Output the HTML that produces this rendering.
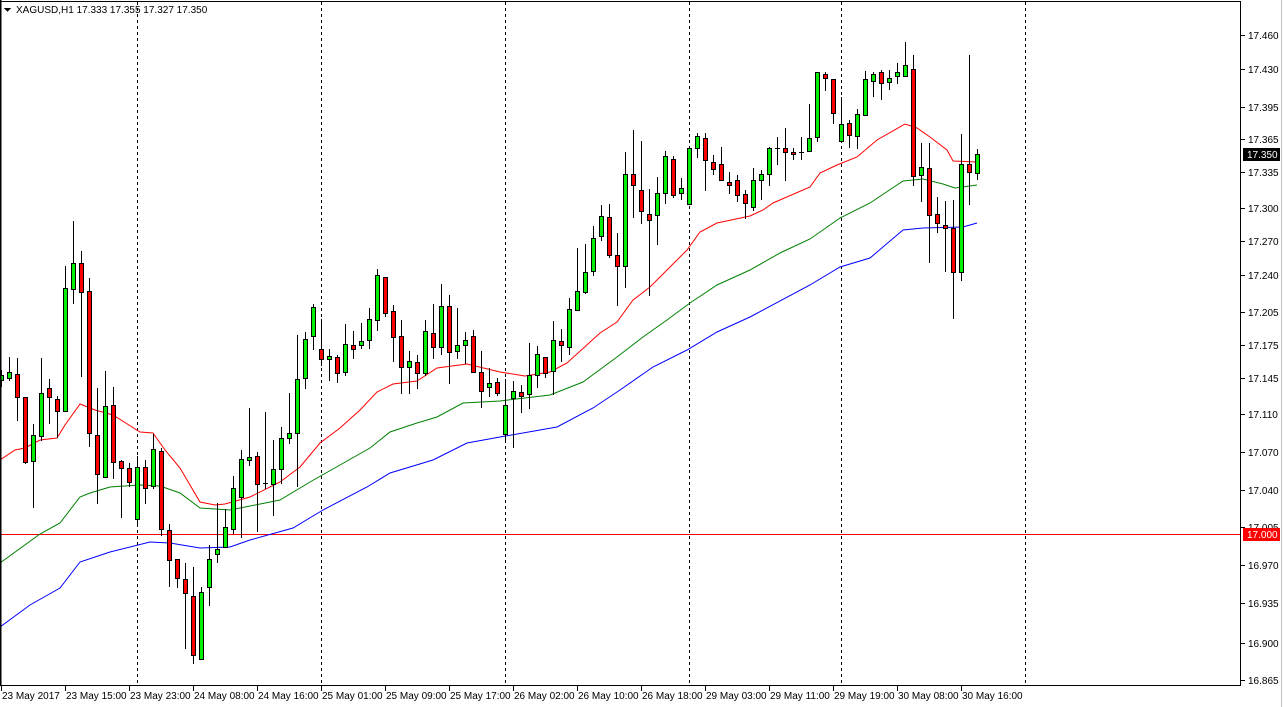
<!DOCTYPE html>
<html><head><meta charset="utf-8"><style>
html,body{margin:0;padding:0;background:#fff;width:1284px;height:707px;overflow:hidden}
svg{display:block}
text{font-family:"Liberation Sans",sans-serif;font-size:10px;fill:#000}
</style></head><body>
<svg id="s" width="1284" height="707" xmlns="http://www.w3.org/2000/svg" shape-rendering="crispEdges">
<rect x="0" y="0" width="1284" height="707" fill="#fff"/>
<g stroke="#000" stroke-dasharray="3,3" stroke-width="1">
<line x1="137.5" y1="2" x2="137.5" y2="686"/><line x1="321.5" y1="2" x2="321.5" y2="686"/><line x1="505.5" y1="2" x2="505.5" y2="686"/><line x1="689.5" y1="2" x2="689.5" y2="686"/><line x1="841.5" y1="2" x2="841.5" y2="686"/><line x1="1025.5" y1="2" x2="1025.5" y2="686"/>
</g>
<line x1="0" y1="534.5" x2="1241" y2="534.5" stroke="#f00"/>
<g id="ma" fill="none" stroke-width="1" shape-rendering="auto">
<polyline stroke="#f00" points="0,460 15,450 25,448 40,440 57,438 65,425 80,404 95,410 113,415 140,432 153,433 165,450 180,468 200,502 215,505 225,504 250,497 280,482 300,467 320,443 340,428 360,410 377,392 393,384 417,381 437,368 467,364 500,372 525,376 550,372 567,363 600,333 617,322 633,300 650,287 667,270 687,250 700,232 717,223 750,216 763,210 773,203 810,187 820,173 837,165 857,157 877,140 905,124 917,128 930,137 947,150 953,161 977,162"/>
<polyline stroke="#008000" points="0,563 40,534 60,523 80,497 90,493 110,487 140,485 160,486 180,493 200,508 230,510 250,506 280,500 310,482 370,448 390,432 417,423 437,417 463,403 500,401 550,395 583,382 617,357 643,337 667,320 690,303 717,285 750,270 780,253 810,239 840,218 870,203 903,181 923,179 943,184 955,188 977,185"/>
<polyline stroke="#00f" points="0,627 30,605 60,588 80,562 110,552 150,542 170,543 200,548 230,547 250,540 293,528 323,510 367,487 390,473 433,460 467,443 500,437 557,427 593,408 620,390 653,367 687,350 717,332 750,317 810,285 840,267 870,258 903,230 923,228 963,227 977,223"/>
</g>
<g id="c"></g>
<rect x="0.5" y="1.5" width="1240" height="684" fill="none" stroke="#000"/>
<line x1="0.5" y1="0" x2="0.5" y2="686" stroke="#000" stroke-width="2"/>
<line x1="1281.5" y1="0" x2="1281.5" y2="707" stroke="#c0c0c0"/>
<g id="ax"></g>
<path d="M4 8h7l-3.5 4z" fill="#000"/>
<text x="16" y="13" style="fill:#000">XAGUSD,H1  17.333 17.355 17.327 17.350</text>
</svg>
<script>
var D=[
[1,'g',375,380,370,386],[1,'g',372,378,357,380],[1,'r',374,397,358,420],[1,'r',397,462,397,463],[1,'g',435,461,424,507],[1,'g',393,436,358,440],[1,'r',388,397,379,423],[1,'r',399,411,396,437],[1,'g',288,411,266,411],[1,'g',263,289,221,303],
[1,'r',263,292,251,376],[1,'r',291,433,278,446],[1,'r',435,474,388,503],[1,'g',406,477,371,477],[1,'r',405,462,387,478],[1,'r',461,468,460,517],[1,'r',468,482,463,486],[1,'g',467,519,456,523],[1,'r',467,488,460,503],[1,'g',449,486,434,488],
[1,'r',451,529,448,535],[1,'r',530,560,524,586],[1,'r',559,578,559,587],[1,'r',579,593,563,648],[1,'r',596,655,567,663],[1,'g',592,659,587,659],[1,'g',559,587,545,605],[1,'g',549,554,503,562],[1,'g',527,547,509,547],[1,'g',488,529,476,533],
[1,'g',459,497,450,537],[1,'g',457,460,408,465],[1,'r',456,484,452,531],[1,'d',483,483,412,488],[1,'g',469,484,440,515],[1,'g',438,469,427,483],[1,'g',433,438,393,443],[1,'g',379,433,335,486],[1,'g',339,378,332,388],[1,'g',307,336,304,349],
[1,'r',349,359,319,365],[1,'g',356,359,349,380],[1,'r',357,373,355,382],[1,'g',344,372,324,375],[1,'r',345,349,331,358],[1,'g',341,345,323,348],[1,'g',319,340,308,348],[1,'g',275,320,269,330],[1,'r',277,313,277,316],[1,'r',311,337,305,361],
[1,'r',336,367,320,393],[1,'g',361,367,351,393],[1,'r',362,373,355,388],[1,'g',331,373,320,375],[1,'r',333,347,304,358],[1,'g',306,347,284,354],[1,'r',306,352,295,383],[1,'g',345,351,308,358],[1,'g',340,345,332,363],[1,'r',336,372,330,372],
[1,'r',372,391,351,407],[1,'g',383,387,368,396],[1,'r',382,393,378,395],[1,'g',405,434,379,440],[1,'g',391,398,381,447],[1,'r',392,396,385,412],[1,'g',375,394,343,408],[1,'g',354,375,346,387],[1,'r',357,373,357,377],[1,'g',340,371,321,394],
[1,'r',341,345,329,361],[1,'g',309,347,298,354],[1,'g',291,310,248,310],[1,'g',272,292,244,293],[1,'g',238,271,226,275],[1,'g',216,236,205,240],[1,'r',217,255,204,257],[1,'r',255,266,233,305],[1,'g',174,266,152,287],[1,'r',174,185,130,217],
[1,'r',190,211,141,223],[1,'r',214,220,189,295],[1,'g',193,215,177,244],[1,'g',156,193,151,203],[1,'r',159,195,156,197],[1,'g',188,193,178,199],[1,'g',148,204,148,204],[1,'g',136,148,133,157],[1,'r',138,160,133,190],[1,'r',162,169,155,174],
[1,'r',164,180,147,180],[1,'r',182,185,172,193],[1,'r',180,195,175,201],[1,'r',194,203,190,218],[1,'g',180,207,168,210],[1,'g',174,180,170,199],[1,'g',148,174,147,185],[1,'d',148,148,137,164],[1,'r',148,152,128,180],[1,'r',152,154,148,159],
[1,'d',152,152,137,159],[1,'g',138,151,104,151],[1,'g',72,137,72,141],[1,'r',74,78,72,90],[1,'r',79,113,79,123],[1,'g',124,141,97,141],[1,'r',123,135,120,147],[1,'g',114,136,109,148],[1,'g',79,115,71,115],[1,'g',74,81,72,96],
[1,'r',72,83,70,99],[1,'g',78,82,70,89],[1,'g',72,76,63,83],[1,'g',65,76,42,76],[1,'r',69,176,55,185],[1,'g',167,175,143,201],[1,'r',168,215,143,262],[1,'r',214,223,197,232],[1,'r',225,228,201,271],[1,'r',228,272,200,318],
[1,'g',164,272,134,280],[1,'r',164,172,55,204],[1,'g',154,173,149,179]];
var h='',w='';
D.forEach(function(d,k){var cx=1+8*k;w+='M'+(cx+.5)+' '+d[4]+'V'+(d[5]+1);
if(d[1]=='d'){h+='<line x1="'+(cx-2)+'" x2="'+(cx+3)+'" y1="'+(d[2]+.5)+'" y2="'+(d[2]+.5)+'" stroke="#000"/>';}
else{var hh=Math.max(d[3]-d[2],1);h+='<rect x="'+(cx-1.5)+'" y="'+(d[2]+.5)+'" width="4" height="'+hh+'" fill="'+(d[1]=='g'?'#00ee00':'#ff0000')+'" stroke="#000"/>';}});
document.getElementById('c').innerHTML='<path d="'+w+'" stroke="#000" fill="none"/>'+h;
var P=[['17.460',35],['17.430',69],['17.395',107],['17.365',139],['17.335',172],['17.300',208],['17.270',241],['17.240',275],['17.205',312],['17.175',345],['17.145',378],['17.110',414],['17.070',452],['17.040',490],['17.005',527],['16.970',565],['16.935',603],['16.900',643],['16.865',680]];
var a='';P.forEach(function(p){a+='<line x1="1241" x2="1245" y1="'+(p[1]+.5)+'" y2="'+(p[1]+.5)+'" stroke="#000"/><text x="1248" y="'+(p[1]+4)+'">'+p[0]+'</text>';});
a+='<rect x="1243" y="148" width="37" height="13" fill="#000"/><text x="1247" y="158" style="fill:#fff">17.350</text>';
a+='<rect x="1243" y="528" width="37" height="13" fill="#f00"/><text x="1247" y="538" style="fill:#fff">17.000</text>';
var T=['23 May 2017','23 May 15:00','23 May 23:00','24 May 08:00','24 May 16:00','25 May 01:00','25 May 09:00','25 May 17:00','26 May 02:00','26 May 10:00','26 May 18:00','29 May 03:00','29 May 11:00','29 May 19:00','30 May 08:00','30 May 16:00'];
T.forEach(function(t,i){var x=1+64*i;a+='<line x1="'+(x+.5)+'" x2="'+(x+.5)+'" y1="686" y2="691" stroke="#000"/><text x="'+(x+1)+'" y="699">'+t+'</text>';});
document.getElementById('ax').innerHTML=a;
</script>
</body></html>
